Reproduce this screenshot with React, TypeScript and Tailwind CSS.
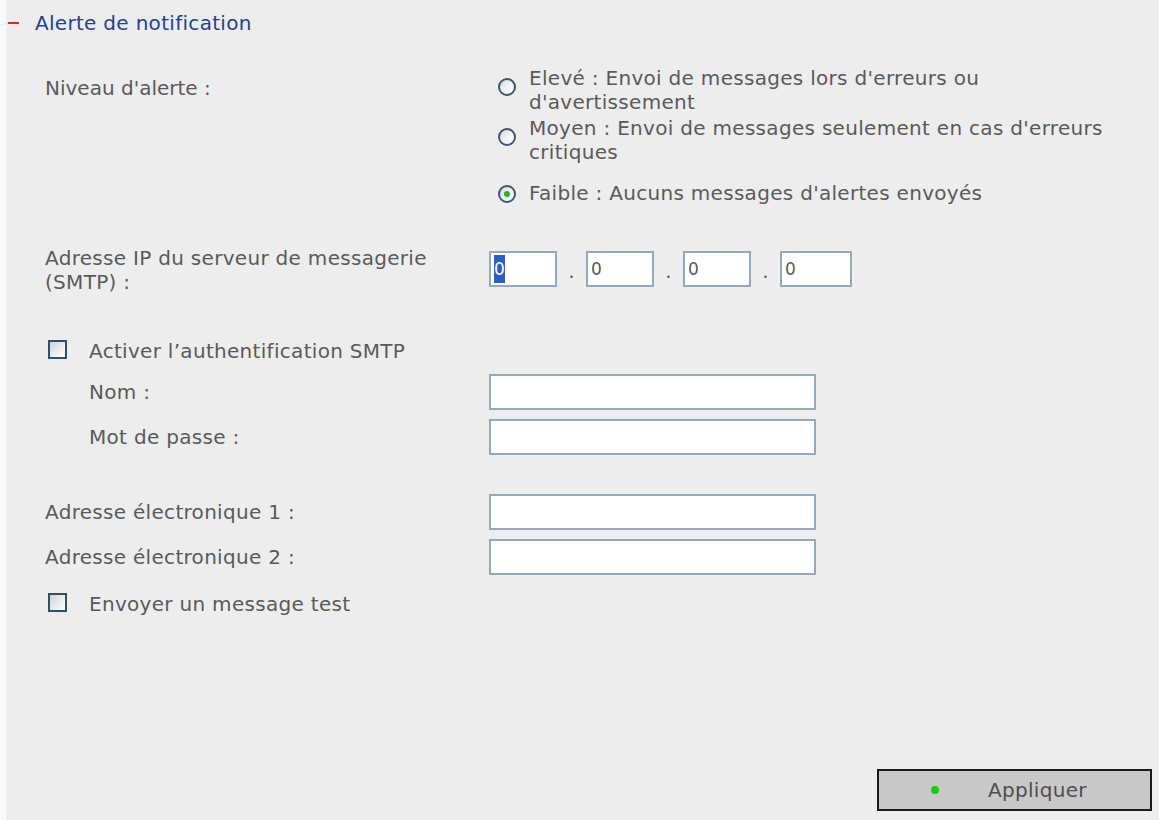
import React from "react";

const font = { fontFamily: '"DejaVu Sans", Verdana, sans-serif' };

function Radio({ checked }: { checked?: boolean }) {
  return (
    <span className="relative inline-flex h-[18px] w-[18px] shrink-0 items-center justify-center rounded-full border-[2px] border-[#3e5874] bg-gradient-to-br from-[#d6d6d6] via-[#f2f2f2] to-[#ffffff]">
      {checked && <span className="h-[6px] w-[6px] rounded-full bg-[#1fb51f]" />}
    </span>
  );
}

function Check() {
  return (
    <span className="inline-block h-[19px] w-[19px] shrink-0 border-[2px] border-[#2f4f6f] bg-gradient-to-br from-[#d4d4d4] to-[#ffffff]" />
  );
}

function Field() {
  return <div className="h-[36px] w-[327px] border-[2px] border-[#94a8c0] bg-white" />;
}

function IpBox({ children, w }: { children?: React.ReactNode; w: string }) {
  return (
    <div className={`${w} flex h-[36px] items-center border-[2px] border-[#94a8c0] bg-white pl-[3px] text-[17px]`}>
      {children}
    </div>
  );
}

export default function App() {
  return (
    <div
      className="relative h-[820px] w-full border-l-[6px] border-[#f8f8f8] bg-[#ededed] text-[20px] leading-[21px] tracking-[0.3px] text-[#5a5a5a]"
      style={font}
    >
      {/* header */}
      <div className="flex h-[46px] items-center">
        <span className="ml-[2px] inline-block h-[2px] w-[11px] bg-[#e4232c]" />
        <span className="ml-[16px] text-[#22409a]">Alerte de notification</span>
      </div>

      <div className="pl-[39px]">
        {/* Niveau d'alerte */}
        <div className="mt-[20px] flex">
          <div className="w-[444px] pt-[12px] tracking-[0px]">Niveau d'alerte :</div>
          <div className="flex flex-col pl-[9px]">
            <div className="flex items-center">
              <span className="-mt-[2px]"><Radio /></span>
              <div className="ml-[13px] whitespace-nowrap leading-[24px]">
                Elevé : Envoi de messages lors d'erreurs ou
                <br />
                d'avertissement
              </div>
            </div>
            <div className="mt-[2px] flex items-center">
              <span className="-mt-[2px]"><Radio /></span>
              <div className="ml-[13px] whitespace-nowrap leading-[24px]">
                Moyen : Envoi de messages seulement en cas d'erreurs
                <br />
                critiques
              </div>
            </div>
            <div className="mt-[19px] flex items-center">
              <Radio checked />
              <div className="ml-[13px] whitespace-nowrap">Faible : Aucuns messages d'alertes envoyés</div>
            </div>
          </div>
        </div>

        {/* IP */}
        <div className="mt-[42px] flex items-center">
          <div className="w-[444px] leading-[24px]">
            Adresse IP du serveur de messagerie
            <br />
            (SMTP) :
          </div>
          <div className="-mt-[2px] flex items-center">
            <IpBox w="w-[68px]">
              <span className="flex h-[28px] w-[11px] items-center justify-center bg-[#2c5cc5] text-white">0</span>
            </IpBox>
            <span className="w-[29px] pt-[4px] text-center">.</span>
            <IpBox w="w-[68px]">0</IpBox>
            <span className="w-[29px] pt-[4px] text-center">.</span>
            <IpBox w="w-[68px]">0</IpBox>
            <span className="w-[29px] pt-[4px] text-center">.</span>
            <IpBox w="w-[72px]">0</IpBox>
          </div>
        </div>

        {/* SMTP auth */}
        <div className="mt-[46px] flex items-center">
          <span className="ml-[3px]"><Check /></span>
          <span className="ml-[22px]">Activer l’authentification SMTP</span>
        </div>
        <div className="mt-[11px] flex items-center">
          <div className="w-[444px] pl-[44px]">Nom :</div>
          <Field />
        </div>
        <div className="mt-[9px] flex items-center">
          <div className="w-[444px] pl-[44px]">Mot de passe :</div>
          <Field />
        </div>

        {/* emails */}
        <div className="mt-[39px] flex items-center">
          <div className="w-[444px]">Adresse électronique 1 :</div>
          <Field />
        </div>
        <div className="mt-[9px] flex items-center">
          <div className="w-[444px]">Adresse électronique 2 :</div>
          <Field />
        </div>
        <div className="mt-[18px] flex items-center">
          <span className="ml-[3px]"><Check /></span>
          <span className="ml-[22px]">Envoyer un message test</span>
        </div>
      </div>

      {/* button */}
      <div className="mt-[153px] flex justify-end pr-[7px]">
        <button className="flex h-[42px] w-[275px] items-center border-[2px] border-[#1a1a1a] bg-[#c8c8c8] text-[#4e4e4e]">
          <span className="ml-[52px] h-[8px] w-[8px] rounded-full bg-[#10d010]" />
          <span className="ml-[49px]">Appliquer</span>
        </button>
      </div>
    </div>
  );
}
